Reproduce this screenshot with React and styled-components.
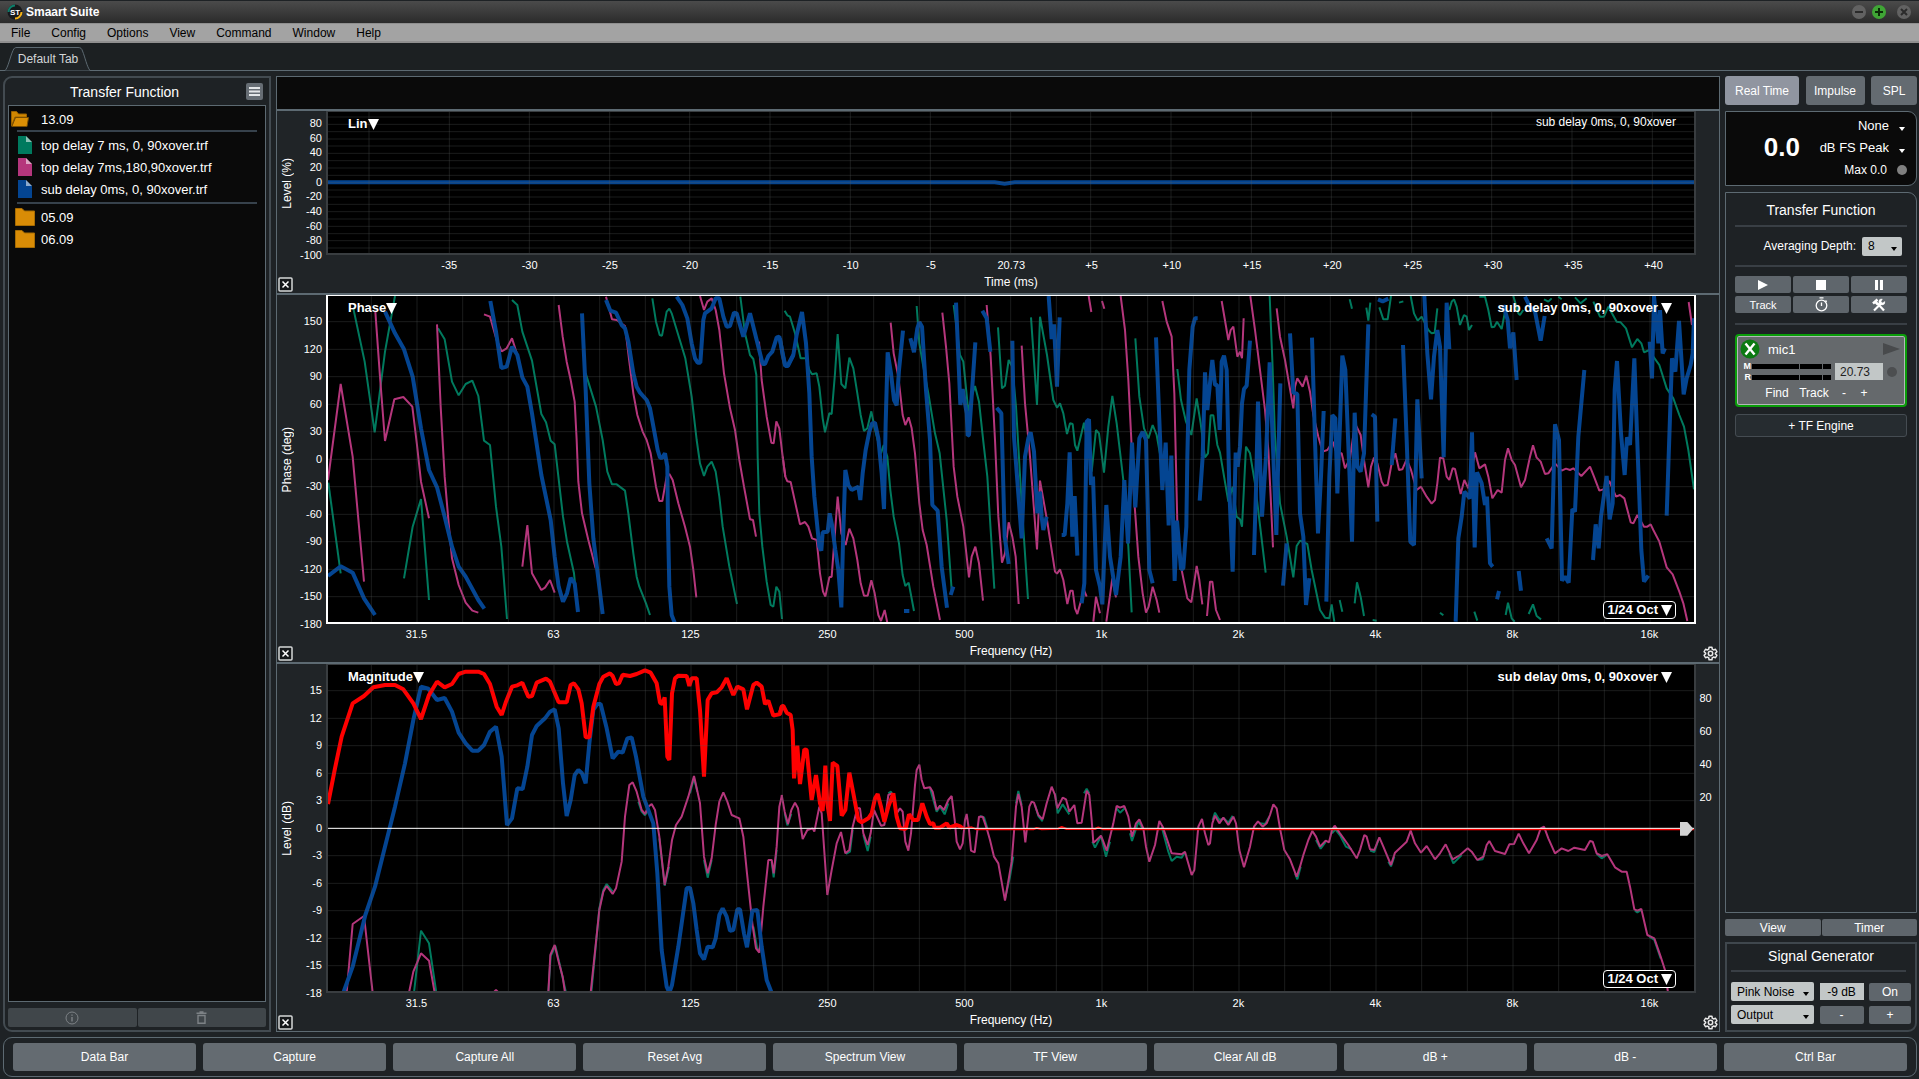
import React, { useState } from 'react'
import styled, { createGlobalStyle, css } from 'styled-components'

const GREEN = '#007a5e'
const PINK = '#b5367c'
const BLUE = '#044592'
const RED = '#ff0000'

const LOW = -24
const MID = 1356
const HIGH = 2736

const phaseTraces = [
    {
        color: GREEN,
        width: 2,
        parts: [
            [LOW, [
                '25,578 62,850',
                '100,55 134,215 164,427 195,185 225,18',
                '252,865 278,710 303,627 327,930',
                '354,115 374,148 396,275 416,316 437,282 457,272 475,318 492,452 510,465 528,650 544,770 561,987',
                '576,30 592,45 607,125 636,212 664,372 678,397 692,452 704,463 729,680 741,755 762,850 770,930',
                '797,250 828,350 848,450 862,545 876,583 890,583 915,602 925,670 940,790 950,860 958,890 978,940 990,975',
                '997,25 1008,95 1019,135 1026,137 1040,65 1048,56 1055,70 1096,205 1115,320 1130,450 1140,520 1152,558 1162,530 1175,515 1187,545 1198,620 1208,710 1228,830 1251,942',
                '1261,20 1275,130 1290,195 1300,207 1309,255 1313,500 1318,670 1327,770 1340,875 1352,945 1360,950 1369,890 1378,905 1386,987'
            ]],
            [MID, [
                '14,62 22,76 30,80 45,130 62,205 78,205 88,240 96,253 110,250 118,290 128,385 135,427 148,370 155,372 165,250 173,132 184,282 196,295 208,203 220,235 232,310 242,375 252,423 262,415 274,364 284,415 303,490 311,465 322,500 331,600 341,680 357,760 368,855 376,888 386,878 402,963',
                '410,48 418,160 430,230 445,310 465,430 479,490 500,690 515,900',
                '521,45 532,130 540,195 550,215 565,365 575,320 585,288 597,335 610,455 622,560 632,720 643,896',
                '654,112 666,295 675,287 686,210 697,230 708,350 725,640 744,927',
                '753,82 771,345 780,80 801,195 820,330 831,353 840,340 850,370 861,432 870,400 878,402 885,465 892,482 912,398 925,480 935,545 948,420 957,430 972,548 985,410 997,318 1010,400 1030,570 1045,770 1055,967',
                '1066,145 1078,320 1092,415 1105,445 1118,405 1130,435 1145,520',
                '1192,237 1203,330 1218,395 1234,435 1250,325 1262,400 1275,502 1284,490 1292,376 1300,376 1312,465 1320,488 1345,635 1358,590 1370,680 1380,688 1386,710 1398,470 1410,490 1425,580 1457,848'
            ]],
            [HIGH, [
                '89,18 97,210 105,440 120,640 140,740 160,862 170,768 180,752 202,762 215,840 240,960 255,983 268,985 275,943 283,995',
                '299,930 307,965',
                '344,940 351,877 362,920 372,978',
                '398,990 410,992',
                '329,28 336,56',
                '379,53 385,92 391,38',
                '418,52 430,88 443,88 453,18',
                '477,38 490,34',
                '512,18 522,70 533,92 545,80 565,120 575,130 584,128 592,55',
                '628,60 635,35 642,28 650,50 660,105 672,75 680,80 687,120 696,105',
                '718,20 735,20 745,60 755,112 763,110 771,95 785,117 795,65',
                '820,18 835,70 840,75 850,60',
                '912,28 925,35 935,25',
                '955,20 965,28',
                '1005,22 1022,40 1040,25',
                '1060,35 1080,80 1092,80 1105,50 1130,95 1142,97 1158,115 1176,172 1192,147 1204,160 1212,187 1228,180 1240,200 1258,225 1280,295 1300,325 1318,375 1332,410 1345,480 1362,598',
                '600,968 610,976',
                '703,965 712,992',
                '797,975 804,938 815,985 824,995',
                '866,972 879,943 890,978 903,988'
            ]]
        ]
    },
    {
        color: PINK,
        width: 2,
        parts: [
            [LOW, [
                '24,570 62,282 98,500 132,875',
                '166,65 180,260 195,453 223,328 250,321 277,350 291,465 303,575 327,685',
                '351,103 362,350 374,560 386,700 396,805 416,885 437,938 457,962 475,968',
                '492,73 510,80 530,150 545,184 560,175 576,145 592,195',
                '607,830 622,705 636,850 664,900 675,893 690,870 704,908',
                '716,45 728,140 740,215 752,270 764,335 770,450 775,575 786,670 805,750 827,835',
                '858,20 876,88 890,90 915,108 928,215 940,310 952,375 968,425 980,450 992,490 1008,590 1018,633 1027,633 1040,560 1048,552 1058,570 1075,640 1095,710 1110,770 1120,840 1129,922',
                '1140,18 1152,60 1162,35 1175,25 1187,60 1198,120 1212,250 1230,355 1245,420 1258,510 1272,590 1290,688 1299,690 1308,740',
                '1317,155 1325,270 1340,380 1354,458 1361,460 1369,394 1378,415 1388,500 1396,560'
            ]],
            [MID, [
                '8,500 16,560 22,574 32,576 60,703 75,696 85,710 96,745 110,750 120,850 129,905 136,920 148,862 155,860 173,620 184,730 197,765 208,716 220,745 232,810 242,880 252,917 263,917 274,871 284,910 295,975 303,993 314,960 322,998',
                '332,98 341,190 355,260 368,375 376,405 386,382 395,415 405,490 418,640 428,720 440,765 460,890 480,990',
                '487,68 498,170 508,280 521,530 532,620 550,710 567,862 575,800 586,770 597,820 609,932',
                '620,45 632,200 645,450 655,680 666,818 675,790 686,697 697,740 707,800 716,942',
                '725,167 735,340 750,500 771,778 780,572 801,690 825,845 831,851 840,838 850,870 862,942 871,902 878,902 885,955 892,972 912,900 920,920',
                '940,995 948,920 960,970',
                '979,995 997,865 1008,922',
                '926,18 934,66',
                '966,33 973,56',
                '1022,18 1035,120 1045,270 1053,430 1062,620 1075,800 1088,910 1098,968 1106,950 1118,890 1130,930 1138,968',
                '1147,33 1160,95 1175,140 1183,310 1192,700 1205,840 1222,925 1234,937 1250,828 1258,870 1267,943',
                '1281,978 1290,875 1297,875 1308,960 1320,990',
                '1325,33 1345,150 1352,120 1360,110 1372,200 1380,185 1386,205 1391,85'
            ]],
            [HIGH, [
                '31,18 45,120 60,240 75,360 85,480 92,620 99,772',
                '110,55 120,140 135,210 160,355 165,290 172,265 188,290 199,257 210,305 220,375 235,440 248,485 262,480 278,455 290,490 305,490 315,535 330,505 345,400 362,435 372,510 385,592 393,530 402,503 412,520 425,575 432,587 443,585 455,520 466,490 477,540 487,538 500,508 513,540 530,600 543,590 560,620 575,641 585,630 592,580 600,503 610,505 620,560 628,570 638,535 645,537 662,612 673,570 685,595 705,487 718,535 735,523 745,560 757,625 773,600 785,608 795,510 804,475 815,510 825,525 843,592 855,570 870,500 879,466 890,503 902,515 915,552 925,550 945,520 965,542 978,536 990,540 1000,535 1024,558 1050,530 1062,560 1078,602 1090,598 1108,573 1128,620 1140,615 1153,625 1172,697 1180,700 1192,675 1212,710 1222,710 1232,703 1240,720 1258,755 1280,832 1298,853 1318,905 1330,940 1342,993',
                '1346,36 1356,105'
            ]]
        ]
    },
    {
        color: BLUE,
        width: 4,
        parts: [
            [LOW, [
                '24,858 62,829 98,848 132,925 165,975',
                '195,65 225,130 252,178 278,260 303,415 327,540 351,592 374,680 396,770 416,830 437,860 475,930 493,956',
                '511,33 528,125 544,234 560,230 576,170 592,195 607,262 622,290 636,370 664,555 692,690 704,800 716,890 729,935 741,910 752,864 764,880 774,966',
                '786,70 797,300 808,580 820,745 848,972',
                '858,30 871,62 888,68 905,105 915,115 925,155 940,250 950,290 960,308 980,330 990,355 1003,425 1013,480 1020,503 1027,503 1035,490 1042,530 1044,700 1048,890 1055,975 1064,998',
                '1070,20 1087,45 1102,85 1115,160 1125,205 1133,218 1141,218 1150,90 1155,70 1175,55 1187,25 1198,25 1210,80 1220,110 1230,108 1242,68 1250,70 1270,140 1290,70 1310,150 1328,222 1335,222 1345,198 1357,185 1370,142 1378,140 1395,225 1402,228 1420,195'
            ]],
            [MID, [
                '0,145 8,195 16,228 24,228 40,195 50,135 66,66 78,160 88,310 95,500 103,620 118,770 124,782 128,727 143,725 149,670 156,705 166,780 175,840 184,952 190,720 196,540 205,585 215,600 235,590 241,630 248,550 257,480 268,425 276,400 285,398 295,445 305,550 312,657 317,400 323,187 333,250 342,330 350,346 357,240 369,122',
                '391,145 402,187 412,115 418,96 426,110 438,300 450,450 457,645 473,662 485,830 501,953',
                '372,963 388,963',
                '512,915 520,890',
                '528,38 535,200 541,345 548,297 560,370 563,437 567,435 577,290 586,157',
                '607,62 620,85 631,185',
                '650,353 664,370 674,740 686,822',
                '697,152 702,440 725,745 735,500 745,445 752,427 762,485 772,670 780,605 785,680 790,720 800,680',
                '845,735 854,735 862,640 869,487 877,740 884,618 892,797',
                '806,18 815,147 822,103 831,290 839,82',
                '905,940 913,880 920,395 927,388 933,585 939,560 948,840 960,890 967,943 979,645 990,800 1008,915 1022,800 1033,570 1044,760 1056,458 1066,652 1078,445 1088,425 1098,450 1108,840 1118,880',
                '1128,142 1140,440 1147,600 1157,458 1166,706 1174,497 1184,873 1191,692 1203,838 1210,835 1219,710 1222,500 1228,240 1238,110 1245,85 1253,85',
                '1259,632 1268,500 1275,247 1282,360 1297,210 1305,285 1312,285 1319,420 1325,215 1332,197 1340,240 1348,600 1358,845 1367,488 1373,530 1380,470 1386,340 1392,297 1400,287 1410,152'
            ]],
            [HIGH, [
                '42,795 48,600 54,335 66,680 78,500 89,217 97,420 109,735 115,500 121,280',
                '129,887 140,760',
                '150,130 160,308 172,312 180,670 190,740 198,945 208,865',
                '216,143 225,450 234,730 243,560 251,363',
                '259,935 268,560 277,375 286,385 292,610 300,400 307,197 316,240 328,540 336,755 344,368 352,530 362,545 372,490 379,280 385,103',
                '395,373 405,380 412,695',
                '455,525 466,385',
                '489,165 500,450 511,755 522,765 532,328 545,565',
                '414,28 428,34 445,26',
                '553,18 562,190 573,328 582,200 592,120 600,170 611,502 620,38 628,177',
                '647,995 655,745 665,680 673,605 690,625 696,427 704,772 711,547 725,580 735,645 741,620 750,820 758,830',
                '771,928 777,903',
                '836,843 843,902',
                '790,45 803,90 810,175 820,127 830,270',
                '855,20 870,50 885,65 902,152 914,78',
                '920,745 935,775 945,403 957,450 966,872 975,860 986,878 997,657 1005,665 1015,440 1033,240',
                '1059,810 1067,703 1076,775 1083,680 1100,558 1109,688 1118,640 1124,300 1131,213 1143,430 1154,555 1161,442 1170,465 1183,205 1192,460 1204,780 1212,875 1225,857',
                '1229,155 1236,265 1242,18 1255,160 1260,60 1268,190 1275,175',
                '1280,677 1288,440 1296,205 1306,245 1317,93 1331,313 1340,265 1352,225 1358,190 1362,85'
            ]]
        ]
    }
]

const magnitudeTraces = [
    {
        color: GREEN,
        width: 2,
        parts: [
            [LOW, [
                '282,998 303,812 327,850 349,998',
                '685,998 692,888 706,858 718,908 738,998',
                '814,998 838,745 850,690 860,672 878,695',
                '955,425 965,455 975,466 985,450',
                '1018,535 1034,677 1047,620',
                '1110,400 1122,354 1132,395',
                '1152,600 1163,653 1175,600',
                '1300,800 1312,868 1322,870',
                '1355,605 1361,652 1370,570'
            ]],
            [MID, [
                '14,460 22,496 34,462',
                '198,582 210,575 218,510',
                '250,525 263,573 272,530',
                '325,400 333,395 340,410',
                '450,384 470,455 480,440 494,463 505,430',
                '600,468 612,472 622,505',
                '675,716 690,650 700,590',
                '708,430 715,393 725,435',
                '765,435 775,468 788,484',
                '825,400 833,460 848,433 868,463',
                '912,400 920,386 928,400',
                '937,545 945,563 963,528 978,590 990,545',
                '1010,445 1020,458 1034,445',
                '1050,520 1056,543 1075,485 1090,508',
                '1145,500 1165,575 1175,603 1190,590 1205,593 1215,577',
                '1298,480 1305,458 1318,480 1332,475 1345,488 1358,467'
            ]],
            [HIGH, [
                '60,490 75,492 88,470',
                '165,640 172,658 182,620',
                '228,540 242,566 257,546',
                '276,520 286,508 300,526 318,560 335,568',
                '390,572 403,576 415,540',
                '445,605 453,619 463,590',
                '628,580 640,610 665,585',
                '712,600 728,598 738,565',
                '1070,582 1085,595 1100,585',
                '1185,752 1192,757 1204,750',
                '1228,830 1243,840 1262,895'
            ]]
        ]
    },
    {
        color: PINK,
        width: 2,
        parts: [
            [LOW, [
                '80,998 98,792 132,768 158,998',
                '267,998 280,935 303,880 327,902 344,998',
                '522,996 528,990 534,996',
                '685,998 691,885 704,855 716,905 728,950 735,998',
                '812,998 838,750 850,695 860,678 878,702 888,685 905,605 915,470 928,375 938,367 950,395 965,450 975,462 985,440 995,432 1005,450 1018,530 1034,675 1045,620 1056,540 1068,495 1085,470 1105,410 1122,348 1140,430 1152,590 1163,640 1175,595 1187,495 1198,425 1210,397 1222,425 1235,465 1258,475 1270,530 1281,640 1297,790 1308,865 1318,878 1330,740 1345,600 1355,600 1361,640 1370,560 1378,440 1386,405'
            ]],
            [MID, [
                '5,405 14,455 24,492 34,450 45,428 54,445 68,537 82,510 98,505 103,515 118,440 125,460 142,705 155,630 170,550 183,516 196,580 208,570 218,500 232,445 240,445 250,520 263,555 272,520 282,450 303,497 313,495 325,405 335,400 350,460 360,445 368,455 376,545 385,572 393,520 405,375 410,330 418,314 425,360 433,385 450,382 458,395 470,450 480,437 492,450 505,420 515,408 524,480 530,545 540,568 548,550 555,480 560,462 567,510 573,572 584,577 597,470 608,470 620,505 630,540 642,590 655,610 675,722 695,605 708,440 715,402 725,440 736,547 748,440 755,425 762,428 775,465 788,478 800,430 815,380 825,405 832,445 848,413 858,418 868,455 883,435 892,490 905,488 920,392 928,405 935,480 940,548 950,540 963,527 970,545 980,572 1000,490 1010,438 1020,443 1033,438 1045,470 1056,530 1068,490 1078,478 1090,505 1098,560 1108,605 1125,555 1138,483 1148,500 1160,535 1175,580 1205,583 1215,575 1222,600 1235,645 1243,630 1255,500 1266,477 1275,520 1285,555 1290,550 1297,490 1305,467 1318,490 1330,473 1345,495 1360,470 1368,490 1378,570 1392,622'
            ]],
            [HIGH, [
                '12,622 30,560 42,500 54,484 68,500 80,490 90,465 100,433 110,445 120,505 133,570 150,598 170,650 180,620 190,585 205,540 217,513 228,530 240,560 257,542 267,547 276,510 284,497 300,520 325,555 350,595 360,570 373,525 380,530 390,568 403,570 418,532 430,560 453,615 465,578 500,545 512,512 525,550 543,578 560,558 585,598 600,580 617,553 638,598 660,585 683,565 695,575 712,600 730,590 740,555 748,543 765,573 795,582 808,553 822,552 836,521 850,550 867,580 890,540 902,505 912,500 925,535 945,580 965,565 985,573 1003,563 1035,570 1050,543 1058,545 1070,580 1085,588 1102,583 1125,622 1145,635 1160,635 1170,680 1183,748 1192,752 1204,747 1222,825 1243,835 1262,890 1275,930 1284,998'
            ]]
        ]
    },
    {
        color: BLUE,
        width: 4,
        parts: [
            [LOW, [
                '70,998 98,920 136,765 165,680 195,560 225,440 255,310 280,180 303,80 325,86 351,120 374,114 396,155 416,218 437,250 457,272 475,272 492,255 510,215 528,200 545,290 561,495 576,475 592,385 608,387 622,320 636,225 650,198 675,175 690,155 704,148 716,205 729,370 740,468 752,420 764,345 775,330 786,340 797,370 808,250 820,150 832,132 842,132 860,205 878,295 895,275 908,278 922,235 935,232 948,290 970,410 1000,490 1012,640 1025,870 1040,980 1048,998 1056,975 1075,860 1100,685 1110,683 1120,730 1130,810 1140,880 1152,898 1163,860 1178,862 1187,835 1198,765 1208,745 1220,770 1230,812 1240,810 1252,748 1260,748 1272,820 1281,862 1297,752 1312,750 1325,860 1340,960 1354,996'
            ]]
        ]
    },
    {
        color: RED,
        width: 4,
        parts: [
            [LOW, [
                '24,432 45,325 65,230 98,130 132,108 160,82 195,75 225,75 250,88 280,130 303,177 327,105 351,65 374,82 396,72 416,42 437,35 475,35 492,42 510,72 530,140 545,165 558,125 576,80 592,76 607,68 625,110 636,108 650,68 678,56 690,65 716,127 740,127 752,75 762,70 775,88 785,130 797,232 808,232 820,140 838,72 850,50 870,40 878,48 888,72 897,70 908,44 930,48 950,42 975,31 992,38 1010,70 1020,128 1027,132 1034,112 1042,290 1048,300 1056,100 1065,55 1075,47 1100,48 1108,78 1115,55 1130,55 1140,150 1152,350 1163,120 1175,100 1190,97 1205,82 1220,55 1240,105 1252,80 1270,88 1281,148 1300,75 1310,68 1325,80 1335,132 1345,122 1360,167 1380,162 1386,138'
            ]],
            [MID, [
                '0,158 6,138 10,138 20,158 32,165 38,210 42,355 52,257 60,372 73,268 80,270 95,420 108,345 120,430 128,453 136,317 142,430 150,483 158,308 172,318 185,467 196,450 208,338 220,400 235,480 245,487 265,475 275,460 285,415 293,402 303,440 313,485 325,440 340,400 350,470 360,505 377,507 387,463 400,480 414,480 427,430 440,470 450,492 460,490 464,503 480,503 500,490 508,503 530,495 542,500 548,505'
            ]]
        ]
    },
    {
        color: RED,
        width: 2,
        parts: [
            [MID, ['548,506 575,502 590,508 760,508 770,504 785,508 835,506 845,501 860,507 945,507 955,502 970,508 1440,508']],
            [HIGH, ['40,506 70,508 190,507 200,508 1362,508']]
        ]
    }
]

const frequencyTicks = ['31.5', '63', '125', '250', '500', '1k', '2k', '4k', '8k', '16k']
const timeTicks = ['-35', '-30', '-25', '-20', '-15', '-10', '-5', '20.73', '+5', '+10', '+15', '+20', '+25', '+30', '+35', '+40']

const range = (count, start, step) =>
    Array.from({ length: count }, (_, i) => Math.round(start + i * step))

const frequencyGrid = range(29, 130, 137)
const phaseGrid = range(11, 77, 82.5)
const magnitudeGrid = range(11, 77, 82.5)
const timeGrid = range(17, 123, 240.6)
const levelGrid = range(19, 15, 21.85)

const files = [
    { name: 'top delay 7 ms, 0, 90xover.trf', color: GREEN },
    { name: 'top delay 7ms,180,90xover.trf', color: PINK },
    { name: 'sub delay 0ms, 0, 90xover.trf', color: BLUE }
]

const commands = ['Data Bar', 'Capture', 'Capture All', 'Reset Avg', 'Spectrum View', 'TF View', 'Clear All dB', 'dB +', 'dB -', 'Ctrl Bar']

const Grid = ({ xs, ys, height }) => (
    <g stroke="#5a5c5e" strokeOpacity="0.3" strokeWidth="1">
        {xs.map((x) => (
            <line key={`x${x}`} x1={x} x2={x} y1="0" y2={height} vectorEffect="non-scaling-stroke" />
        ))}
        {ys.map((y) => (
            <line key={`y${y}`} x1="0" x2="4098" y1={y} y2={y} vectorEffect="non-scaling-stroke" />
        ))}
    </g>
)

const Traces = ({ traces, top }) =>
    traces.map((trace, i) => (
        <g key={i} fill="none" stroke={trace.color} strokeWidth={trace.width} strokeLinejoin="bevel">
            {trace.parts.map(([left, lines]) => (
                <g key={left} transform={`translate(${left} ${-top})`}>
                    {lines.map((points) => (
                        <polyline key={points} points={points} vectorEffect="non-scaling-stroke" />
                    ))}
                </g>
            ))}
        </g>
    ))

const Down = () => (
    <svg width="11" height="11" viewBox="0 0 11 11" aria-hidden="true">
        <path d="M0 0h11L5.5 11z" fill="#fff" />
    </svg>
)

const Gear = () => (
    <svg width="15" height="15" viewBox="0 0 24 24" fill="none" stroke="#e8e8e8" strokeWidth="2.4" strokeLinejoin="round" aria-hidden="true">
        <path d="M9.7 2h4.6l.6 3.2 2 1.1 3.1-1.1 2.3 4-2.5 2.1v1.4l2.5 2.1-2.3 4-3.1-1.1-2 1.1-.6 3.2H9.7l-.6-3.2-2-1.1L4 18.8l-2.3-4 2.5-2.1v-1.4L1.7 9.2l2.3-4 3.1 1.1 2-1.1z" />
        <circle cx="12" cy="12" r="3.5" />
    </svg>
)

const FolderOpen = () => (
    <svg width="18" height="16" viewBox="0 0 18 16" aria-hidden="true">
        <path d="M.5 15V.5h5l2 2.5h8V6H4z" fill="#d18700" stroke="#9a6200" />
        <path d="M.8 15.5 4.5 6.5h13l-1.5 9z" fill="#dc9005" stroke="#7a4e00" />
    </svg>
)

const Folder = () => (
    <svg width="20" height="18" viewBox="0 0 20 18" aria-hidden="true">
        <path d="M.5 17.5V.5h6.500l2.500 2.500h10v14.500z" fill="#d98c06" stroke="#a86c02" />
    </svg>
)

const FileIcon = ({ color }) => (
    <svg width="14" height="18" viewBox="0 0 14 18" aria-hidden="true">
        <path d="M0 0h8l6 6v12H0z" fill={color} />
        <path d="M8 0v6h6z" fill="#fff" fillOpacity="0.55" />
    </svg>
)

const Chart = ({ title, label, weight, selected, yTicks, yTitle, rightTicks, xTicks, xTitle, xPad, tickTop, legend, plainLegend, smoothing, children }) => (
    <ChartBox $weight={weight}>
        <YAxis>
            <YTitle>{yTitle}</YTitle>
            <YTicks $top={tickTop}>
                {yTicks.map((t) => <YTick key={t}>{t}</YTick>)}
            </YTicks>
        </YAxis>
        <Plot $selected={selected}>
            {children}
            <PlotButton>{title}<Down /></PlotButton>
            {plainLegend
                ? <PlainLegend>{legend}</PlainLegend>
                : <LegendButton>{legend}<Down /></LegendButton>}
            {smoothing && <SmoothingButton>{smoothing}<Down /></SmoothingButton>}
        </Plot>
        <RightAxis>
            {rightTicks && rightTicks.map((t) => <YTick key={t} $center>{t}</YTick>)}
        </RightAxis>
        <Corner>
            <IconButton aria-label={`Close ${label}`}>
                <svg width="15" height="15" viewBox="0 0 15 15">
                    <rect x="1" y="1" width="13" height="13" rx="1" fill="#15181a" stroke="#d5d7d8" strokeWidth="1.5" />
                    <path d="M4.5 4.5l6 6m0-6l-6 6" stroke="#fff" strokeWidth="1.5" />
                </svg>
            </IconButton>
        </Corner>
        <div>
            <XTicks $pad={xPad}>
                {xTicks.map((t) => <XTick key={t}>{t}</XTick>)}
            </XTicks>
            <XTitle>{xTitle}</XTitle>
        </div>
        <Corner $end>
            {smoothing && <IconButton aria-label={`${label} settings`}><Gear /></IconButton>}
        </Corner>
    </ChartBox>
)

const Dropdown = ({ label, value, options = [], plain }) => (
    <SelectWrap $plain={plain}>
        <Select aria-label={label} defaultValue={value} $plain={plain}>
            <option>{value}</option>
            {options.map((o) => <option key={o}>{o}</option>)}
        </Select>
        <svg width="6" height="4" viewBox="0 0 6 4" aria-hidden="true">
            <path d="M0 0h6L3 4z" fill="currentColor" />
        </svg>
    </SelectWrap>
)

const App = () => {
    const [mode, setMode] = useState('Real Time')

    return (
        <Page>
            <GlobalStyle />
            <TitleBar>
                <svg width="16" height="16" viewBox="0 0 16 16" aria-hidden="true">
                    <circle cx="8" cy="8" r="7.5" fill="#16191b" />
                    <path d="M1.5 8A6.5 6.5 0 0 1 8 1.5" fill="none" stroke="#0c7f6a" strokeWidth="2" />
                    <path d="M14.5 8A6.5 6.5 0 0 1 8 14.5" fill="none" stroke="#f5b316" strokeWidth="2" />
                    <text x="8" y="11" textAnchor="middle" fontSize="8" fontWeight="bold" fill="#fff">ST</text>
                </svg>
                <Name>Smaart Suite</Name>
                <WindowButtons>
                    <WindowButton aria-label="Minimise" $color="#626262">
                        <svg width="14" height="14" viewBox="0 0 14 14"><circle cx="7" cy="7" r="7" /><path d="M3 7h8" stroke="#2b2b2b" strokeWidth="2" /></svg>
                    </WindowButton>
                    <WindowButton aria-label="Maximise" $color="#3fa535">
                        <svg width="14" height="14" viewBox="0 0 14 14"><circle cx="7" cy="7" r="7" /><path d="M3 7h8M7 3v8" stroke="#0b2c08" strokeWidth="2" /></svg>
                    </WindowButton>
                </WindowButtons>
                <WindowButton aria-label="Close" $color="#626262">
                    <svg width="14" height="14" viewBox="0 0 14 14"><circle cx="7" cy="7" r="7" /><path d="M4 4l6 6m0-6l-6 6" stroke="#2b2b2b" strokeWidth="2" /></svg>
                </WindowButton>
            </TitleBar>
            <MenuBar>
                {['File', 'Config', 'Options', 'View', 'Command', 'Window', 'Help'].map((m) => (
                    <button key={m}>{m}</button>
                ))}
            </MenuBar>
            <TabStrip>
                <Tab>
                    <svg width="86" height="24" viewBox="0 0 86 24" aria-hidden="true">
                        <path d="M0 23.5C3 21 5 10 8 3.5 9 1 10 .5 12 .5h61c3 0 3.500 1 4.500 3.500C80 10 82 20 85 23.5" fill="#1f2326" stroke="#5d6a72" />
                    </svg>
                    <span>Default Tab</span>
                </Tab>
            </TabStrip>

            <Workspace>
                <DataPanel>
                    <DataHeader>
                        <PanelTitle>Transfer Function</PanelTitle>
                        <ListButton aria-label="Data menu">
                            <svg width="11" height="9" viewBox="0 0 11 9"><path d="M0 1h11M0 4.5h11M0 8h11" stroke="#e3e6e8" strokeWidth="2" /></svg>
                        </ListButton>
                    </DataHeader>
                    <FileList>
                        <FileRow $open><FolderOpen /><span>13.09</span></FileRow>
                        <FileGroup>
                            {files.map((f) => (
                                <FileRow key={f.name}><FileIcon color={f.color} /><span>{f.name}</span></FileRow>
                            ))}
                        </FileGroup>
                        <FileRow><Folder /><span>05.09</span></FileRow>
                        <FileRow><Folder /><span>06.09</span></FileRow>
                    </FileList>
                    <DataActions>
                        <DimButton aria-label="Info" disabled>
                            <svg width="14" height="14" viewBox="0 0 14 14" fill="none" stroke="#7d8286"><circle cx="7" cy="7" r="6" /><path d="M7 6v4.5M7 3.5v1.2" strokeWidth="1.4" /></svg>
                        </DimButton>
                        <DimButton aria-label="Delete" disabled>
                            <svg width="11" height="13" viewBox="0 0 11 13" fill="none" stroke="#7d8286" strokeWidth="1.4"><path d="M.5 2.2h10M3.5 1h4M2 4.5v7.7h7V4.5z" /></svg>
                        </DimButton>
                    </DataActions>
                </DataPanel>

                <Graphs>
                    <CursorBand />
                    <Chart
                        title="Lin" label="impulse chart" weight={182} tickTop={12}
                        yTitle="Level (%)" yTicks={['80', '60', '40', '20', '0', '-20', '-40', '-60', '-80', '-100']}
                        xTitle="Time (ms)" xTicks={timeTicks} xPad="3.1% 9%"
                        legend="sub delay 0ms, 0, 90xover" plainLegend
                    >
                        <PlotSvg viewBox="0 0 4098 423" preserveAspectRatio="none">
                            <polyline points="0,211 2000,211 2030,215 2060,211 4098,211" fill="none" stroke={BLUE} strokeWidth="4" vectorEffect="non-scaling-stroke" />
                            <Grid xs={timeGrid} ys={levelGrid} height={423} />
                        </PlotSvg>
                    </Chart>
                    <Chart
                        title="Phase" label="phase chart" weight={367} tickTop={26} selected
                        yTitle="Phase (deg)" yTicks={['150', '120', '90', '60', '30', '0', '-30', '-60', '-90', '-120', '-150', '-180']}
                        xTitle="Frequency (Hz)" xTicks={frequencyTicks} xPad="3.4% 6.6%"
                        legend="sub delay 0ms, 0, 90xover" smoothing="1/24 Oct"
                    >
                        <PlotSvg viewBox="0 0 4098 978" preserveAspectRatio="none">
                            <Traces traces={phaseTraces} top={18} />
                            <Grid xs={frequencyGrid} ys={phaseGrid} height={978} />
                        </PlotSvg>
                    </Chart>
                    <Chart
                        title="Magnitude" label="magnitude chart" weight={367} tickTop={26}
                        yTitle="Level (dB)" yTicks={['15', '12', '9', '6', '3', '0', '-3', '-6', '-9', '-12', '-15', '-18']}
                        rightTicks={['80', '60', '40', '20']}
                        xTitle="Frequency (Hz)" xTicks={frequencyTicks} xPad="3.4% 6.6%"
                        legend="sub delay 0ms, 0, 90xover" smoothing="1/24 Oct"
                    >
                        <PlotSvg viewBox="0 0 4098 978" preserveAspectRatio="none">
                            <Traces traces={magnitudeTraces} top={15} />
                            <Grid xs={frequencyGrid} ys={magnitudeGrid} height={978} />
                            <line x1="0" x2="4098" y1="490" y2="490" stroke="#fff" strokeWidth="1" vectorEffect="non-scaling-stroke" />
                            <path d="M4056 471h22l18 20-18 21h-22z" fill="#d2d2d2" />
                        </PlotSvg>
                    </Chart>
                </Graphs>

                <ControlPanel>
                    <Modes>
                        {['Real Time', 'Impulse', 'SPL'].map((m) => (
                            <ModeButton key={m} $active={m === mode} onClick={() => setMode(m)}>{m}</ModeButton>
                        ))}
                    </Modes>
                    <LevelBox>
                        <LevelValue>0.0</LevelValue>
                        <LevelOptions>
                            <Dropdown label="Input" value="None" plain />
                            <Dropdown label="Level scale" value="dB FS Peak" plain />
                            <MaxRow>Max 0.0<Dot $color="#808080" /></MaxRow>
                        </LevelOptions>
                    </LevelBox>
                    <Engine>
                        <EngineTitle>Transfer Function</EngineTitle>
                        <Rule />
                        <Averaging>
                            <label htmlFor="depth">Averaging Depth:</label>
                            <SelectWrap>
                                <Select id="depth" defaultValue="8"><option>8</option><option>16</option></Select>
                                <svg width="6" height="4" viewBox="0 0 6 4" aria-hidden="true"><path d="M0 0h6L3 4z" fill="currentColor" /></svg>
                            </SelectWrap>
                        </Averaging>
                        <Rule />
                        <Transport>
                            <SmallButton aria-label="Play"><svg width="10" height="10" viewBox="0 0 10 10"><path d="M0 0l10 5-10 5z" fill="#fff" /></svg></SmallButton>
                            <SmallButton aria-label="Stop"><svg width="10" height="10" viewBox="0 0 10 10"><path d="M0 0h10v10H0z" fill="#fff" /></svg></SmallButton>
                            <SmallButton aria-label="Pause"><svg width="8" height="10" viewBox="0 0 8 10"><path d="M0 0h3v10H0zM5 0h3v10H5z" fill="#fff" /></svg></SmallButton>
                            <SmallButton>Track</SmallButton>
                            <SmallButton aria-label="Timer"><svg width="13" height="15" viewBox="0 0 13 15" fill="none" stroke="#fff" strokeWidth="1.3"><circle cx="6.5" cy="8.5" r="5.3" /><path d="M4.5 .8h4M6.5 5.5V9M10.500 3.5l1.2 1.2" /></svg></SmallButton>
                            <SmallButton aria-label="Tools"><svg width="14" height="14" viewBox="0 0 14 14" fill="none" stroke="#fff"><path d="M2 12.5 9 5.5" strokeWidth="2.2" /><path d="M12.8 3.5a3 3 0 1 1-2.5-2.500L9 3.5l1.5 1.5z" fill="#fff" strokeWidth=".5" /><path d="M5.5 5.5l6.500 7" strokeWidth="2.2" /><path d="M1 5.5 5.5 1.5M3 3.5l3 3" strokeWidth="2.6" /></svg></SmallButton>
                        </Transport>
                        <Rule />
                        <MicCard>
                            <MicTop>
                                <svg width="20" height="20" viewBox="0 0 20 20" aria-hidden="true"><circle cx="10" cy="10" r="9.5" fill="#0b7a12" /><path d="M5.5 4.5l9 11m0-11l-9 11" stroke="#fff" strokeWidth="2.4" /></svg>
                                <span>mic1</span>
                                <svg width="17" height="12" viewBox="0 0 17 12" aria-hidden="true"><path d="M0 0l17 6-17 6z" fill="#484a4c" /></svg>
                            </MicTop>
                            <MicMiddle>
                                <Meters>
                                    {['M', 'R'].map((m) => (
                                        <Meter key={m}><b>{m}</b><i /><i /><i /></Meter>
                                    ))}
                                </Meters>
                                <DelayInput aria-label="Delay" defaultValue="20.73" />
                                <Dot $color="#4c4e50" />
                            </MicMiddle>
                            <MicActions>
                                <button>Find</button>
                                <button>Track</button>
                                <button>-</button>
                                <button>+</button>
                            </MicActions>
                        </MicCard>
                        <AddEngine>+ TF Engine</AddEngine>
                    </Engine>
                    <ViewTimer>
                        <SmallButton $text={12}>View</SmallButton>
                        <SmallButton $text={12}>Timer</SmallButton>
                    </ViewTimer>
                    <Generator>
                        <PanelTitle>Signal Generator</PanelTitle>
                        <Rule />
                        <GeneratorGrid>
                            <Dropdown label="Signal" value="Pink Noise" />
                            <GainInput aria-label="Gain" defaultValue="-9 dB" />
                            <SmallButton $text={12}>On</SmallButton>
                            <Dropdown label="Destination" value="Output" />
                            <SmallButton $text={12}>-</SmallButton>
                            <SmallButton $text={12}>+</SmallButton>
                        </GeneratorGrid>
                    </Generator>
                </ControlPanel>
            </Workspace>

            <CommandBar>
                {commands.map((c) => <CommandButton key={c}>{c}</CommandButton>)}
            </CommandBar>
        </Page>
    )
}

export default App

const GlobalStyle = createGlobalStyle`
    * {
        box-sizing: border-box;
    }
    body {
        margin: 0;
        background: #1e2225;
        color: #fff;
        font-family: "Liberation Sans", Arial, sans-serif;
        font-size: 12px;
    }
    button, input, select {
        font: inherit;
        color: inherit;
        margin: 0;
        padding: 0;
        border: 0;
        background: none;
    }
    svg {
        display: block;
        flex: none;
    }
`

const Page = styled.div`
    display: flex;
    flex-direction: column;
    height: 100vh;
    min-height: 760px;
    min-width: 1100px;
`

const TitleBar = styled.header`
    display: flex;
    align-items: center;
    height: 23px;
    padding: 0 8px 0 7px;
    background: linear-gradient(#4b4b4b, #2b2b2b);
    border-top: 1px solid #1e2225;
`

const Name = styled.h1`
    flex: 1;
    margin: 0 0 0 3px;
    font-size: 12px;
`

const WindowButtons = styled.div`
    display: flex;
    gap: 6px;
    margin-right: 11px;
`

const WindowButton = styled.button`
    fill: ${(p) => p.$color};
`

const MenuBar = styled.nav`
    display: flex;
    align-items: center;
    gap: 21px;
    height: 20px;
    padding-left: 11px;
    background: #a3a3a3;
    border: solid #8f8f8f;
    border-width: 1px 0 2px;
    color: #000;
`

const TabStrip = styled.div`
    display: flex;
    align-items: flex-end;
    height: 28px;
    padding-left: 5px;
    background: #1c2022;
    border-bottom: 1px solid #5d6a72;
`

const Tab = styled.button`
    position: relative;
    width: 86px;
    height: 24px;
    margin-bottom: -1px;
    color: #d4d6d8;

    svg {
        position: absolute;
        inset: 0;
    }
    span {
        position: relative;
    }
`

const Workspace = styled.main`
    flex: 1;
    min-height: 0;
    display: grid;
    grid-template-columns: 268px minmax(0, 1fr) 192px;
    grid-template-rows: minmax(0, 1fr);
    gap: 5px;
    padding: 5px 2px 5px 3px;
`

const DataPanel = styled.section`
    display: flex;
    flex-direction: column;
    padding: 0 3px 3px;
    border: 2px solid #434b51;
    border-radius: 9px 0 0 9px;
`

const PanelTitle = styled.h2`
    flex: 1;
    margin: 0;
    font-size: 14px;
    font-weight: normal;
    line-height: 16px;
    text-align: center;
`

const DataHeader = styled.div`
    display: flex;
    align-items: center;
    height: 27px;
    padding-right: 3px;

    ${PanelTitle} {
        padding-right: 5px;
    }
`

const ListButton = styled.button`
    display: grid;
    place-items: center;
    width: 17px;
    height: 17px;
    border-radius: 2px;
    background: #666d74;
`

const FileList = styled.div`
    flex: 1;
    padding: 2px 8px;
    border: 1px solid #5d6a72;
    background: #0a0a0a;
    font-size: 13px;
`

const FileRow = styled.div`
    display: grid;
    grid-template-columns: 24px 1fr;
    align-items: center;
    height: 22px;

    svg {
        justify-self: ${(p) => (p.$open ? 'start' : 'center')};
        margin-left: ${(p) => (p.$open ? '-6px' : '-9px')};
    }
`

const FileGroup = styled.div`
    margin-bottom: 2px;
    padding: 2px 0;
    border: solid #37424c;
    border-width: 2px 0;
`

const DataActions = styled.div`
    display: grid;
    grid-template-columns: 1fr 1fr;
    gap: 1px;
    margin-top: 6px;
`

const DimButton = styled.button`
    display: grid;
    place-items: center;
    height: 19px;
    border-radius: 2px;
    background: #40464a;
`

const Graphs = styled.section`
    display: flex;
    flex-direction: column;
    border: 1px solid #5d6a72;
    background: #202427;
`

const CursorBand = styled.div`
    flex: none;
    height: 34px;
    background: #0a0a0a;
    border-bottom: 2px solid #5d6a72;
`

const ChartBox = styled.article`
    flex: ${(p) => p.$weight} 1 0;
    min-height: 0;
    display: grid;
    grid-template-columns: 49px minmax(0, 1fr) 23px;
    grid-template-rows: minmax(0, 1fr) 38px;
    font-size: 11px;

    & + & {
        border-top: 2px solid #5d6a72;
    }
`

const YAxis = styled.div`
    display: flex;
    justify-content: space-between;
    padding: 0 4px 0 3px;
`

const YTitle = styled.div`
    align-self: center;
    writing-mode: vertical-rl;
    transform: rotate(180deg);
    font-size: 12px;
    line-height: 14px;
`

const YTicks = styled.div`
    display: flex;
    flex-direction: column;
    justify-content: space-between;
    padding-top: ${(p) => p.$top}px;
`

const YTick = styled.span`
    height: 0;
    line-height: 0;
    text-align: ${(p) => (p.$center ? 'center' : 'right')};
`

const RightAxis = styled.div`
    display: flex;
    flex-direction: column;
    justify-content: space-between;
    height: 30%;
    margin-top: 34px;
    padding-right: 4px;
`

const Plot = styled.div`
    position: relative;
    min-height: 0;
    border: solid ${(p) => (p.$selected ? '#fff' : '#393d40')};
    border-width: 1px 2px 2px;
    background: #000;
`

const PlotSvg = styled.svg`
    position: absolute;
    width: 100%;
    height: 100%;
`

const overlay = css`
    position: absolute;
    display: flex;
    align-items: center;
    font-size: 13px;
    font-weight: bold;
    line-height: 16px;
`

const PlotButton = styled.button`
    ${overlay}
    top: 4px;
    left: 20px;
`

const LegendButton = styled.button`
    ${overlay}
    top: 4px;
    right: 22px;
    gap: 3px;
`

const PlainLegend = styled.span`
    ${overlay}
    top: 2px;
    right: 18px;
    font-size: 12px;
    font-weight: normal;
`

const SmoothingButton = styled.button`
    ${overlay}
    right: 18px;
    bottom: 3px;
    gap: 3px;
    height: 18px;
    padding: 0 3px;
    border: 1px solid #fff;
    border-radius: 4px;
    background: #000;
`

const Corner = styled.div`
    display: flex;
    align-items: flex-end;
    justify-content: ${(p) => (p.$end ? 'flex-end' : 'flex-start')};
    padding: 1px;
`

const IconButton = styled.button``

const XTicks = styled.div`
    display: flex;
    justify-content: space-between;
    height: 20px;
    padding: 0 ${(p) => p.$pad};
    padding: 0 ${(p) => p.$pad.split(' ')[0]} 0 ${(p) => p.$pad.split(' ')[1]};
    line-height: 20px;
`

const XTick = styled.span`
    display: flex;
    justify-content: center;
    width: 0;
`

const XTitle = styled.div`
    font-size: 12px;
    line-height: 14px;
    text-align: center;
`

const ControlPanel = styled.aside`
    display: flex;
    flex-direction: column;
    gap: 6px;
`

const Modes = styled.div`
    display: grid;
    grid-template-columns: 74px 59px 46px;
    justify-content: space-between;
`

const ModeButton = styled.button`
    height: 29px;
    border-radius: 3px;
    background: ${(p) => (p.$active ? '#9095a0' : '#646b71')};
`

const LevelBox = styled.div`
    display: flex;
    justify-content: flex-end;
    align-items: center;
    gap: 19px;
    height: 75px;
    padding: 0 9px 2px 0;
    border: 1px solid #5d6a72;
    border-radius: 0 9px 9px 0;
    background: #0a0a0a;
`

const LevelValue = styled.strong`
    font-size: 26px;
`

const LevelOptions = styled.div`
    display: flex;
    flex-direction: column;
    align-items: flex-end;
    gap: 2px;
`

const MaxRow = styled.div`
    display: flex;
    align-items: center;
    gap: 10px;
    height: 20px;
`

const Dot = styled.span`
    width: 10px;
    height: 10px;
    border-radius: 50%;
    background: ${(p) => p.$color};
`

const SelectWrap = styled.span`
    position: relative;
    display: block;
    height: ${(p) => (p.$plain ? 20 : 19)}px;
    border-radius: 2px;
    background: ${(p) => (p.$plain ? 'none' : '#c2c7c7')};
    color: ${(p) => (p.$plain ? '#fff' : '#000')};

    svg {
        position: absolute;
        right: ${(p) => (p.$plain ? 2 : 5)}px;
        bottom: 5px;
        pointer-events: none;
    }
`

const Select = styled.select`
    appearance: none;
    width: 100%;
    height: 100%;
    padding: ${(p) => (p.$plain ? '0 18px 0 0' : '0 0 0 6px')};
    font-size: ${(p) => (p.$plain ? 13 : 12)}px;
    text-align-last: ${(p) => (p.$plain ? 'right' : 'left')};
`

const Engine = styled.section`
    flex: 1;
    display: flex;
    flex-direction: column;
    padding: 9px 9px 0;
    border: 1px solid #5d6a72;
    border-radius: 0 9px 0 0;
`

const EngineTitle = styled(PanelTitle)`
    flex: none;
    margin-bottom: 7px;
`

const Rule = styled.hr`
    flex: none;
    width: 100%;
    height: 2px;
    margin: 0;
    border: 0;
    background: #393f45;
`

const Averaging = styled.div`
    display: grid;
    grid-template-columns: 1fr 40px;
    align-items: center;
    gap: 6px;
    height: 38px;
    padding-right: 5px;
    text-align: right;
`

const Transport = styled.div`
    display: grid;
    grid-template-columns: repeat(3, 1fr);
    gap: 3px 2px;
    padding: 9px 0 10px;
`

const SmallButton = styled.button`
    display: grid;
    place-items: center;
    height: 17px;
    border-radius: 2px;
    background: #5f666c;
    font-size: ${(p) => p.$text || 11}px;
`

const MicCard = styled.div`
    margin-top: 9px;
    padding: 3px 4px 4px 2px;
    height: 73px;
    border: 2px solid #0a9d0a;
    border-radius: 4px;
    background: #65696c;
    box-shadow: inset 0 0 0 1px #b4b7b9;
`

const MicTop = styled.div`
    display: flex;
    align-items: center;
    gap: 8px;
    padding: 0 1px;
    font-size: 13px;

    span {
        flex: 1;
    }
`

const MicMiddle = styled.div`
    display: flex;
    align-items: center;
    gap: 4px;
    padding: 2px 4px 0 3px;
`

const Meters = styled.div`
    flex: 1;
    display: grid;
    gap: 1px;
`

const Meter = styled.div`
    display: grid;
    grid-template-columns: 9px 46fr 22fr 8fr;
    align-items: center;
    column-gap: 1px;
    height: 10px;

    b {
        font-size: 9px;
        text-align: right;
    }
    i {
        height: 5px;
        background: #000;
    }
`

const DelayInput = styled.input`
    width: 48px;
    height: 17px;
    padding-left: 5px;
    background: #c2c7c7;
    color: #222;
`

const MicActions = styled.div`
    display: grid;
    grid-template-columns: 24px 30px 10px 10px;
    gap: 10px;
    margin-top: 4px;
    padding-left: 26px;
`

const AddEngine = styled.button`
    height: 23px;
    margin-top: 7px;
    border: 1px solid #454c52;
    border-radius: 3px;
    background: #262c30;
`

const ViewTimer = styled.div`
    display: grid;
    grid-template-columns: 1fr 1fr;
    gap: 1px;
`

const Generator = styled.section`
    height: 90px;
    padding: 4px 4px 0;
    border: 2px solid #3f474d;
    border-radius: 0 0 9px 0;

    ${Rule} {
        width: calc(100% - 5px);
        margin: 6px 0 10px;
    }
`

const GeneratorGrid = styled.div`
    display: grid;
    grid-template-columns: 83px 44px 42px;
    justify-content: space-between;
    align-items: center;
    gap: 4px 0;

    ${SmallButton} {
        height: 18px;
    }
`

const GainInput = styled.input`
    width: 100%;
    height: 17px;
    background: #c2c7c7;
    color: #000;
    text-align: center;
`

const CommandBar = styled.footer`
    display: grid;
    grid-template-columns: repeat(10, 1fr);
    gap: 7px;
    height: 40px;
    margin: 0 2px 2px 3px;
    padding: 5px 9px;
    border: 1px solid #5d6a72;
    border-radius: 9px;
`

const CommandButton = styled.button`
    border-radius: 3px;
    background: #646b71;
`
